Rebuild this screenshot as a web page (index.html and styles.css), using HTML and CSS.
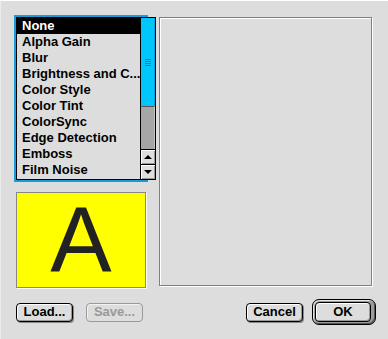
FILE: index.html
```html
<!DOCTYPE html>
<html lang="en">

<head>
  <meta charset="UTF-8">
  <title>Filter</title>
  <link rel="stylesheet" href="styles.css">
</head>

<body>
  <div class="dialog">
    <div class="main">
      <div class="left">
        <div class="listbox">
          <div class="list-frame">
            <ul class="list">
              <li class="selected">None</li>
              <li>Alpha Gain</li>
              <li>Blur</li>
              <li>Brightness and C...</li>
              <li>Color Style</li>
              <li>Color Tint</li>
              <li>ColorSync</li>
              <li>Edge Detection</li>
              <li>Emboss</li>
              <li>Film Noise</li>
            </ul>
            <div class="scrollbar">
              <div class="thumb"><span class="grip"></span></div>
              <div class="track"></div>
              <div class="arrow arrow-up"></div>
              <div class="arrow arrow-down"></div>
            </div>
          </div>
        </div>
        <div class="preview">A</div>
      </div>
      <div class="panel"></div>
    </div>

    <div class="actions">
      <button class="btn btn-load">Load...</button>
      <button class="btn btn-save" disabled>Save...</button>
      <div class="spacer"></div>
      <button class="btn">Cancel</button>
      <div class="default-ring">
        <button class="btn">OK</button>
      </div>
    </div>
  </div>
</body>

</html>
```

FILE: styles.css
```css
* {
  margin: 0;
  padding: 0;
  box-sizing: border-box;
}

body {
  font-family: 'Liberation Sans', Arial, sans-serif;
  font-weight: bold;
  font-size: 13px;
  background-color: #dddddd;
  color: #000;
}

.dialog {
  width: 388px;
  height: 339px;
  background-color: #dddddd;
  border-top: 1px solid #fff;
  border-left: 1px solid #ebebeb;
  padding: 14px 12px 0 13px;
}

.main {
  display: flex;
  align-items: flex-start;
}

.left {
  width: 134px;
  display: flex;
  flex-direction: column;
}

/* list with focus ring */
.listbox {
  height: 167px;
  border: 2px solid #1a9bd7;
  display: flex;
}

.list-frame {
  flex: 1;
  display: flex;
  border: 1px solid #000;
}

.list {
  flex: 1;
  list-style: none;
}

.list li {
  height: 16px;
  line-height: 16px;
  padding-left: 5px;
  white-space: nowrap;
  overflow: hidden;
}

.list li.selected {
  background-color: #000;
  color: #fff;
}

.scrollbar {
  width: 15px;
  border-left: 1px solid #000;
  display: flex;
  flex-direction: column;
}

.thumb {
  height: 88px;
  background-color: #00c6fb;
  border-right: 1px solid #00a8e0;
  display: flex;
  align-items: center;
  justify-content: center;
}

.grip {
  width: 6px;
  height: 7px;
  background: repeating-linear-gradient(#0a7fb8 0 1px, transparent 1px 2px);
}

.track {
  height: 43px;
  background-color: #a6a6a6;
  border-top: 1px solid #555;
  border-right: 1px solid #c4c4c4;
}

.arrow {
  height: 15px;
  background-color: #dedede;
  border-top: 1px solid #000;
  box-shadow: inset 1px 1px 0 #fff, inset -1px -1px 0 #999;
  display: flex;
  align-items: center;
  justify-content: center;
}

.arrow::after {
  content: "";
  width: 0;
  height: 0;
  border-left: 4px solid transparent;
  border-right: 4px solid transparent;
}

.arrow-up::after {
  border-bottom: 4px solid #000;
}

.arrow-down::after {
  border-top: 4px solid #000;
}

.preview {
  margin: 10px 0 0 2px;
  width: 130px;
  height: 96px;
  background-color: #ffff00;
  border: 1px solid #888;
  box-shadow: 1px 1px 0 #fff;
  display: flex;
  align-items: center;
  justify-content: center;
  font-weight: normal;
  font-size: 92px;
  line-height: 1;
  color: #222;
}

.panel {
  margin: 2px 0 0 11px;
  width: 213px;
  height: 269px;
  border: 1px solid #808080;
  box-shadow: 1px 1px 0 #fff, inset 1px 1px 0 #fff;
}

.actions {
  display: flex;
  align-items: center;
  height: 26px;
  margin-top: 11px;
}

.spacer {
  flex: 1;
}

.btn {
  width: 57px;
  height: 19px;
  border: 1px solid #000;
  border-radius: 4px;
  background-color: #dddddd;
  box-shadow: inset 1px 1px 0 #fff, inset -1px -1px 0 #999, 1px 1px 0 #888;
  font-family: inherit;
  font-weight: bold;
  font-size: 13px;
  color: #000;
  line-height: 16px;
}

.btn-load {
  margin-left: 2px;
}

.btn-save {
  margin-left: 13px;
  border-color: #999;
  color: #999;
  box-shadow: inset 1px 1px 0 #f2f2f2;
}

.default-ring {
  margin-left: 9px;
  width: 64px;
  height: 26px;
  border: 1px solid #000;
  border-radius: 7px;
  padding: 2px;
  background-color: #9c9c9c;
  box-shadow: inset 1px 1px 0 #e6e6e6, inset -1px -1px 0 #555;
  display: flex;
}

.default-ring .btn {
  width: 56px;
  height: 20px;
  box-shadow: inset 1px 1px 0 #fff, inset -1px -1px 0 #999;
}
```
